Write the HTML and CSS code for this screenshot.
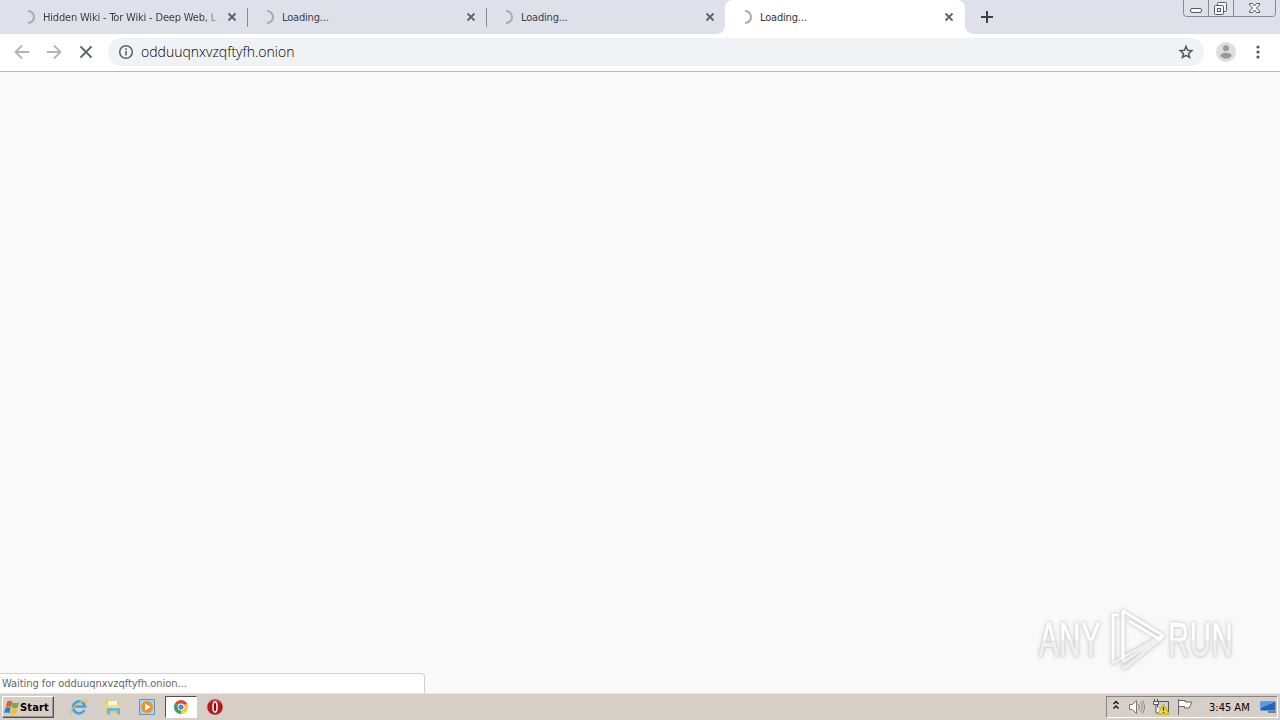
FILE: index.html
```html
<!DOCTYPE html>
<html lang="en">
<head>
<meta charset="utf-8">
<title>Loading...</title>
<link rel="stylesheet" href="styles.css">
</head>
<body>
<div class="screen">
  <header class="tabstrip">
    <div class="tab first"><svg class="spin" viewBox="0 0 16 16"><path d="M8 2a6 6 0 0 1 0 12"/></svg><span class="title clip">Hidden Wiki - Tor Wiki - Deep Web, Li</span><svg class="close" viewBox="0 0 10 10"><path d="M1.500 1.500l7 7M8.500 1.500l-7 7"/></svg></div>
    <div class="tab"><svg class="spin" viewBox="0 0 16 16"><path d="M8 2a6 6 0 0 1 0 12"/></svg><span class="title">Loading...</span><svg class="close" viewBox="0 0 10 10"><path d="M1.500 1.500l7 7M8.500 1.500l-7 7"/></svg></div>
    <div class="tab last"><svg class="spin" viewBox="0 0 16 16"><path d="M8 2a6 6 0 0 1 0 12"/></svg><span class="title">Loading...</span><svg class="close" viewBox="0 0 10 10"><path d="M1.500 1.500l7 7M8.500 1.500l-7 7"/></svg></div>
    <div class="tab active"><svg class="spin" viewBox="0 0 16 16"><path d="M8 2a6 6 0 0 1 0 12"/></svg><span class="title">Loading...</span><svg class="close" viewBox="0 0 10 10"><path d="M1.500 1.500l7 7M8.500 1.500l-7 7"/></svg></div>
    <svg class="plus" viewBox="0 0 12 12"><path d="M6 0v12M0 6h12"/></svg>
    <svg class="winctl" viewBox="0 0 94 18"><path class="frame" d="M.5 0v13.500q0 3 3 3h86q3 0 3-3V0M25.500 0v16.500M50.500 0v16.500"/><g class="glyph"><rect x="7.500" y="8.500" width="11" height="4" rx="1.500"/><path d="M34.500 5.500V3.500q0-1 1-1h7q1 0 1 1v7q0 1-1 1h-2"/><rect x="31.500" y="5.500" width="9" height="9" rx="1"/><rect x="34.500" y="8.500" width="3" height="3"/><path d="M66.500 3.500h3l2 2.500 2-2.500h3v1.500l-3 3 3 3v1.500h-3l-2-2.500-2 2.500h-3V11l3-3-3-3z"/></g></svg>
  </header>
  <nav class="toolbar">
    <svg class="nav" viewBox="0 0 16 16"><path d="M15 8H2M8 1.500L1.500 8 8 14.500"/></svg>
    <svg class="nav" viewBox="0 0 16 16"><path d="M1 8h13M8 1.500L14.500 8 8 14.500"/></svg>
    <svg class="nav stop" viewBox="0 0 16 16"><path d="M2.500 2.500l11 11M13.500 2.500l-11 11"/></svg>
    <div class="omnibox">
      <svg class="info" viewBox="0 0 16 16"><circle cx="8" cy="8" r="6.300"/><path d="M8 7v4.500M8 4.300v1.600"/></svg>
      <span class="url">odduuqnxvzqftyfh.onion</span>
      <svg class="star" viewBox="0 0 16 16"><path d="M8 2.300l1.600 4 4.200.3-3.200 2.800 1 4.100L8 11.300l-3.600 2.200 1-4.100-3.200-2.800 4.200-.3z"/></svg>
    </div>
    <svg class="avatar" viewBox="0 0 20 20"><circle cx="10" cy="10" r="10" fill="#dedede"/><circle cx="10" cy="6.300" r="3" fill="#999"/><path d="M4.300 14c0-4.200 11.400-4.200 11.400 0q-2.300 2.700-5.700 2.700T4.300 14z" fill="#999"/></svg>
    <svg class="dots" viewBox="0 0 4 14"><circle cx="2" cy="2" r="1.600"/><circle cx="2" cy="7" r="1.600"/><circle cx="2" cy="12" r="1.600"/></svg>
  </nav>
  <main class="page">
    <div class="status"><span>Waiting for odduuqnxvzqftyfh.onion...</span></div>
    <div class="mark"><span class="word any">ANY</span>
      <svg class="play" viewBox="0 0 60 64"><path class="edge" d="M7 50v5l50-28M17 50v4l40-25M57 29L19 60l-3-2"/><path class="line" d="M13 7H7v44M17 51V3l40 24.500-3 4L23 13"/></svg>
      <span class="word run">RUN</span></div>
  </main>
  <footer class="taskbar">
    <div class="start"><svg viewBox="0 0 18 18"><path d="M3.500 2.500q3-2 6 0L8 8.500q-3-2-6 0z" fill="#e65b2b"/><path d="M10 3q3 2 7 0L15.500 9q-3 2-7 0z" fill="#72b43c"/><path d="M1.500 9.500q3-2 6 0L6 15.500q-3-2-6 0z" fill="#2c81ca"/><path d="M8.200 10q3 2 7 0l-1.500 6q-3 2-7 0z" fill="#f5bf2c"/></svg><span>Start</span></div>
    <div class="launch">
      <svg class="task" viewBox="0 0 18 18"><path d="M14.500 12a6 6 0 1 1 .5-3.500H5" fill="none" stroke="#3aa5e0" stroke-width="2.600"/><path d="M1.500 16Q-.5 12 7 6.500T17 2q.5 1-2 4" fill="none" stroke="#eebd42" stroke-width="1.300"/></svg>
      <svg class="task" viewBox="0 0 18 18"><path d="M2 2h5l1 2h7v11H2z" fill="#e6ca68"/><path d="M4 3h9v5H4z" fill="#fff6cc"/><path d="M2 7h13v3H2z" fill="#f2dd87"/><path d="M3 10h13v6.500h-3V13H6v3.500H3z" fill="#65b9df"/></svg>
      <svg class="task" viewBox="0 0 18 18"><path d="M1.500 1.500h15v15h-15z" fill="#a8d2ec" stroke="#6396bd"/><circle cx="9" cy="9" r="6" fill="#f29322"/><path d="M7 5.500l5.500 3.500L7 12.500z" fill="#fff"/></svg>
      <div class="pressed"><svg class="chrome" viewBox="0 0 16 16"><path d="M8 8L1.900 4.500A7 7 0 0 1 14.100 4.500z" fill="#dd4937"/><path d="M8 8l6.100-3.500A7 7 0 0 1 8 15z" fill="#f7c934"/><path d="M8 8v7A7 7 0 0 1 1.900 4.500z" fill="#3ba257"/><circle cx="8" cy="8" r="3.400" fill="#fff"/><circle cx="8" cy="8" r="2.600" fill="#4a86e8"/></svg></div>
      <svg class="task opera" viewBox="0 0 18 18"><circle cx="9" cy="9" r="7.800" fill="#b3191d"/><path d="M3 5q6-5 12 0" stroke="#d9585a" fill="none"/><ellipse cx="9" cy="9" rx="2" ry="5" fill="#8a0b10" stroke="#fff" stroke-width="1.500"/></svg>
    </div>
    <div class="tray">
      <svg class="chev" viewBox="0 0 8 10"><path d="M1.500 4L4 1.500 6.500 4M1.500 8.500L4 6l2.500 2.500"/></svg>
      <svg class="ti vol" viewBox="0 0 18 18"><path d="M1.500 6.500h3l4-4v13l-4-4h-3z" fill="#fff" stroke="#777"/><path d="M10.500 6q2 3 0 6M12.500 4q3.500 5 0 10M14.500 2.500q4 6.500 0 13" fill="none" stroke="#888"/></svg>
      <svg class="ti net" viewBox="0 0 18 18"><path d="M5.500 3.500h11v10h-11z" fill="#ccd" stroke="#555"/><path d="M2.500 1v3M5.500 1v3M1.500 3.500h5v3h-5zM4 7v8h5" fill="#fff" stroke="#555"/><path d="M11.500 6l5.500 10H6z" fill="#ffdc22" stroke="#c8a600"/><path d="M11.500 9v4M11.500 14v1" stroke="#333" stroke-width="1.300"/></svg>
      <svg class="ti flag" viewBox="0 0 18 18"><path d="M2.500 1v16M3 2.500h6v1.500h7L13 10H8.500V8.500H3" fill="#fff" stroke="#666"/></svg>
      <span class="clock">3:45 AM</span>
      <svg class="desk" viewBox="0 0 18 14"><path d="M1 1h16v10H1z" fill="#2464b4" stroke="#bcd6ee"/><path d="M2 2h14L2 8z" fill="#5b9ddd"/><path d="M9 12h8" stroke="#234"/></svg>
    </div>
  </footer>
</div>
</body>
</html>
```
FILE: styles.css
```css
* { box-sizing: border-box; }
body { margin: 0; font-family: "DejaVu Sans Condensed", "DejaVu Sans", sans-serif; font-stretch: condensed; font-size: 11px; }
svg { display: block; flex: none; }
.screen { width: 1280px; height: 720px; display: flex; flex-direction: column; overflow: hidden; background: #f9f9f9; }
.tabstrip { height: 34px; flex: none; display: flex; background: #dee1e9; }
.tab { width: 239px; height: 34px; display: flex; align-items: center; padding: 0 11px 0 12px; position: relative; color: #3c4043; }
.tab.first { width: 248px; padding-left: 21px; }
.tab.last { width: 238px; padding-right: 10px; }
.tab.first::after, .tab:nth-child(2)::after { content: ""; position: absolute; right: 0; top: 8px; width: 1px; height: 19px; background: #878a92; }
.spin { width: 16px; height: 16px; margin-left: -1px; fill: none; stroke: #a8aab0; stroke-width: 2; }
.title { flex: 1; margin-left: 7px; padding-top: 2px; white-space: nowrap; overflow: hidden; line-height: 18px; letter-spacing: -.18px; }
.clip { -webkit-mask-image: linear-gradient(90deg, #000 93%, transparent 102%); mask-image: linear-gradient(90deg, #000 93%, transparent 102%); margin-right: 10px; }
.close { width: 10px; height: 10px; fill: none; stroke: #5f6368; stroke-width: 1.8; }
.active { width: 240px; background: #fff; border-radius: 8px 8px 0 0; padding: 0 11px 0 13px; color: #333; }
.active::before, .active::after { content: ""; position: absolute; bottom: 0; width: 8px; height: 8px; }
.active::before { left: -8px; background: radial-gradient(circle at 0 0, transparent 7.5px, #fff 8px); }
.active::after { right: -8px; background: radial-gradient(circle at 100% 0, transparent 7.5px, #fff 8px); }
.plus { width: 12px; height: 12px; margin: 11px 0 0 16px; fill: none; stroke: #3c4043; stroke-width: 2; }
.winctl { width: 94px; height: 18px; margin-left: auto; margin-right: 3px; }
.frame { fill: none; stroke: #888b94; }
.glyph { fill: #f8f9fc; stroke: #565a68; }
.toolbar { height: 38px; flex: none; display: flex; align-items: center; background: #fff; border-bottom: 1px solid #b5b8b5; padding: 0 20px 1px 14px; }
.nav { width: 16px; height: 16px; margin-right: 16px; fill: none; stroke: #b4b4b4; stroke-width: 1.8; }
.stop { margin-right: 14px; stroke: #5f6368; }
.omnibox { width: 1096px; height: 28px; border-radius: 14px; display: flex; align-items: center; background: #f0f3f6; padding: 0 10px; }
.info { width: 16px; height: 16px; fill: none; stroke: #5f6368; stroke-width: 1.6; }
.url { flex: 1; margin-left: 7px; font-family: "Open Sans", sans-serif; font-weight: 300; font-stretch: normal; font-size: 14px; line-height: 20px; letter-spacing: 0; color: #000; }
.star { width: 16px; height: 16px; fill: none; stroke: #55585c; stroke-width: 1.5; }
.avatar { width: 20px; height: 20px; margin-left: 12px; }
.dots { width: 4px; height: 14px; margin-left: 20px; fill: #55585c; }
.page { flex: 1; display: flex; align-items: flex-end; background: #f9f9f9; }
.status { width: 425px; height: 20px; border: 1px solid #d2d2d2; border-width: 1px 1px 0 0; border-radius: 0 4px 0 0; background: #fff; color: #666; padding-left: 2px; line-height: 19px; letter-spacing: -.05px; white-space: nowrap; }
.mark { display: flex; align-items: center; width: 200px; height: 66px; margin: 0 0 20px 612px; color: #fff; filter: drop-shadow(0 0 1px #c4c4c4) drop-shadow(0 0 2px #dcdcdc); }
.word { font: 48px/56px "Liberation Sans", sans-serif; letter-spacing: 1px; transform-origin: 0 50%; white-space: nowrap; background: linear-gradient(#fff 50%, #efefef 51%); background-clip: text; -webkit-background-clip: text; color: transparent; flex: none; }
.word.any, .word.run { transform: scaleX(.61); width: 106px; }
.word.any { margin: 0 -38px 0 2px; -webkit-text-stroke: 1px transparent; }
.word.run { margin-left: 2px; -webkit-text-stroke: 1px transparent; }
.play { width: 60px; height: 64px; fill: none; margin-left: -1px; stroke-linejoin: round; }
.edge { stroke: #efefef; stroke-width: 3; }
.line { stroke: #fff; stroke-width: 3; }
.taskbar { height: 27px; flex: none; display: flex; align-items: center; background: #d6cfc7; border-top: 1px solid #e9e6e0; padding: 0 2px 1px; }
.start { width: 52px; height: 22px; display: flex; align-items: center; border: 1px solid; border-color: #fff #55524e #55524e #fff; box-shadow: inset -1px -1px #9b958e; padding: 1px 0 0 1px; font-weight: bold; letter-spacing: .15px; color: #000; }
.start svg { width: 16px; height: 17px; }
.launch { display: flex; align-items: center; }
.task { width: 18px; height: 18px; margin-left: 16px; }
.task:first-child { margin-left: 16px; }
.pressed { width: 32px; height: 22px; margin-left: 9px; display: flex; align-items: center; justify-content: center; background: #fff; border: 1px solid; border-color: #55524e #fff #fff #55524e; }
.chrome { width: 16px; height: 16px; }
.task.opera { margin-left: 9px; }
.tray { width: 172px; height: 22px; margin-left: auto; display: flex; align-items: center; border: 1px solid; border-color: #8a857e #fff #fff #8a857e; padding: 0 0 0 5px; color: #000; }
.chev { width: 8px; height: 10px; margin-top: -3px; fill: none; stroke: #111; stroke-width: 1.4; }
.ti { width: 18px; height: 18px; }
.vol { margin-left: 8px; }
.net { margin-left: 6px; }
.flag { margin-left: 6px; }
.clock { margin-left: 15px; padding-top: 1px; width: 51px; letter-spacing: 0; white-space: nowrap; }
.desk { width: 18px; height: 14px; }
```
